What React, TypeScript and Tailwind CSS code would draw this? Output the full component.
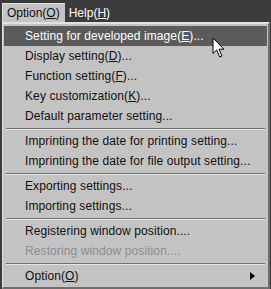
import React from 'react';

type Entry =
  | { kind: 'item'; label: string; key?: string; tail?: string; active?: boolean; disabled?: boolean; sub?: boolean }
  | { kind: 'sep' };

const entries: Entry[] = [
  { kind: 'item', label: 'Setting for developed image(', key: 'E', tail: ')...', active: true },
  { kind: 'item', label: 'Display setting(', key: 'D', tail: ')...' },
  { kind: 'item', label: 'Function setting(', key: 'F', tail: ')...' },
  { kind: 'item', label: 'Key customization(', key: 'K', tail: ')...' },
  { kind: 'item', label: 'Default parameter setting...' },
  { kind: 'sep' },
  { kind: 'item', label: 'Imprinting the date for printing setting...' },
  { kind: 'item', label: 'Imprinting the date for file output setting...' },
  { kind: 'sep' },
  { kind: 'item', label: 'Exporting settings...' },
  { kind: 'item', label: 'Importing settings...' },
  { kind: 'sep' },
  { kind: 'item', label: 'Registering window position....' },
  { kind: 'item', label: 'Restoring window position....', disabled: true },
  { kind: 'sep' },
  { kind: 'item', label: 'Option(', key: 'O', tail: ')', sub: true },
];

const Cursor: React.FC = () => (
  <svg className="absolute left-[212px] top-[37px]" width="15" height="22" viewBox="0 0 15 22">
    <path
      d="M1 1 L1 16.5 L4.7 12.9 L7.7 20 L9.9 19 L7 12.2 L12 12.2 Z"
      fill="#ffffff"
      stroke="#000000"
      strokeWidth="1"
      strokeLinejoin="miter"
    />
  </svg>
);

const App: React.FC = () => {
  return (
    <div
      className="relative w-[271px] h-[289px] bg-[#3b3b3b] overflow-hidden text-[12px] leading-none"
      style={{ fontFamily: '"Liberation Sans", Arial, sans-serif' }}
    >
      {/* menu bar */}
      <div className="flex items-end h-[22px] pl-[2px]">
        <div className="h-[19px] flex items-center pl-[4px] pr-[5px] bg-[#c3c3c3] text-[#111] border-t border-l border-[#e0e0e0]">
          Option(<span className="underline">O</span>)
        </div>
        <div className="h-[19px] flex items-center px-[4px] text-white">
          Help(<span className="underline">H</span>)
        </div>
      </div>

      {/* dropdown */}
      <div className="ml-[2px] w-[268px] h-[267px] flex flex-col bg-[#c3c3c3] border-t-2 border-l border-t-[#e2e2e2] border-l-[#e2e2e2] border-r-2 border-b-2 border-r-[#6e6e6e] border-b-[#6e6e6e] pt-[2px]">
        {entries.map((e, i) =>
          e.kind === 'sep' ? (
            <div key={i} className="h-[5px] flex flex-col justify-center px-[3px]">
              <div className="h-px bg-[#6f6f6f]" />
              <div className="h-px bg-[#e4e4e4]" />
            </div>
          ) : (
            <div
              key={i}
              className={
                'h-[20px] flex items-center pl-[21px] pr-[6px] mx-[1px] ' +
                (e.active ? 'bg-[#5b5b5b] text-white' : e.disabled ? 'text-[#8e8e8e]' : 'text-[#111]')
              }
            >
              <span className="flex-1 whitespace-nowrap tracking-[0.1px]">
                {e.label}
                {e.key && <span className="underline">{e.key}</span>}
                {e.tail}
              </span>
              {e.sub && (
                <svg width="5" height="8" viewBox="0 0 5 8" className="mr-[6px]">
                  <path d="M0 0 L5 4 L0 8 Z" fill="#000" />
                </svg>
              )}
            </div>
          )
        )}
      </div>

      <Cursor />
    </div>
  );
};

export default App;
